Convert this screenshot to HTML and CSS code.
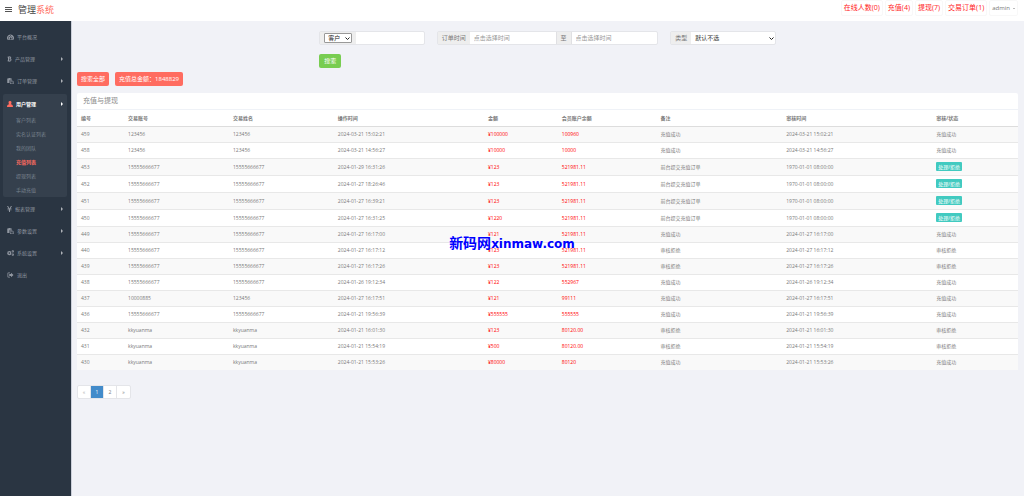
FILE: index.html
```
<!DOCTYPE html>
<html lang="zh-CN">
<head>
    <meta charset="UTF-8">
    <title>管理系统</title>
    <link rel="stylesheet" href="styles.css">
</head>
<body>
    <!--图标-->
    <svg class="sprite" aria-hidden="true">
        <symbol id="i-dash" viewBox="0 0 14 12"><path fill-rule="evenodd" d="M7 1a7 7 0 0 0-6 10.500h12A7 7 0 0 0 7 1zM2 7.200h1.800v1.800H2zM3.500 4h1.800v1.800H3.500zM6.200 2.500h1.600v1.800H6.200zM10.200 7.200H12v1.800h-1.800zM9.500 4l-1.600 3.600a1.600 1.600 0 1 1-1 0L8.800 4z"/></symbol>
        <symbol id="i-btc" viewBox="0 0 10 12"><path fill-rule="evenodd" d="M1 1.500h2.500V0h1v1.500h1V0h1v1.700C9 2.200 9 5 7.500 5.600 10 6.500 9.500 10 6.500 10.400V12h-1v-1.500h-1V12h-1v-1.500H1V9h1V3H1zM4 3v2h1.500c1.500 0 1.500-2 0-2zM4 6.500V9h2c1.600 0 1.600-2.500 0-2.500z"/></symbol>
        <symbol id="i-paste" viewBox="0 0 13 12"><path fill-rule="evenodd" d="M0 1h2.500V0h4v1H9v2.500H5.500L4.500 5v5H0zM5.500 4.500h4v3H13V12H5.500zM10.500 4.500L13 6.800h-2.500zM6.500 5.500V11H12V8.500H8.500v-3z"/></symbol>
        <symbol id="i-user" viewBox="0 0 12 12"><path d="M6 0a3 3 0 0 1 3 3.200c0 1.500-.600 2.600-1.400 3.200C10.500 7 12 8.500 12 12H0c0-3.500 1.500-5 4.400-5.600C3.600 5.800 3 4.700 3 3.200A3 3 0 0 1 6 0z"/></symbol>
        <symbol id="i-yen" viewBox="0 0 10 12"><path d="M0 0h2.200L5 4.800 7.800 0H10L7 5.200h2v1.200H6v1h3v1.200H6V12H4V8.600H1V7.400h3v-1H1V5.200h2z"/></symbol>
        <symbol id="i-cogs" viewBox="0 0 15 12"><path fill-rule="evenodd" d="M4 1.500h2l.3 1.400 1.400-.8L9 3.500l-.8 1.300 1.500.4v2l-1.500.4.8 1.300-1.300 1.400-1.400-.8L6 11H4l-.3-1.500-1.400.8L1 8.900l.7-1.300L0 7.200v-2l1.700-.4L1 3.500l1.300-1.400 1.400.8zM5 4.500a1.700 1.700 0 1 0 0 3.400 1.700 1.700 0 0 0 0-3.400zM12.500 0a2.500 2.500 0 1 1 0 5 2.500 2.500 0 0 1 0-5zm0 1.500a1 1 0 1 0 0 2 1 1 0 0 0 0-2zM12.500 7a2.500 2.500 0 1 1 0 5 2.500 2.500 0 0 1 0-5zm0 1.500a1 1 0 1 0 0 2 1 1 0 0 0 0-2z"/></symbol>
        <symbol id="i-out" viewBox="0 0 12 12"><path d="M5 1v1.500H1.500v7H5V11H1.500C.5 11 0 10.500 0 9.500v-7C0 1.500.5 1 1.500 1zM7 1.500L12 6l-5 4.500V8H3.500V4H7z"/></symbol>
    </svg>

    <header class="header">
        <button class="toggle" aria-label="菜单"><span></span><span></span><span></span></button>
        <a class="logo" href="#">管理<span>系统</span></a>
        <nav class="top-nav">
            <a href="#">在线人数(0)</a>
            <a href="#">充值(4)</a>
            <a href="#">提现(7)</a>
            <a href="#">交易订单(1)</a>
            <a class="admin" href="#">admin <i class="caret"></i></a>
        </nav>
    </header>

    <div class="container">
        <!--左侧菜单-->
        <aside class="sidebar">
            <ul>
                <li><a class="item" href="#"><svg><use href="#i-dash"/></svg>平台概况</a></li>
                <li><a class="item" href="#"><svg class="narrow"><use href="#i-btc"/></svg>产品管理<i class="arrow"></i></a></li>
                <li><a class="item" href="#"><svg><use href="#i-paste"/></svg>订单管理<i class="arrow"></i></a></li>
                <li class="open">
                    <a class="item" href="#"><svg class="user"><use href="#i-user"/></svg>用户管理<i class="arrow"></i></a>
                    <ul class="sub">
                        <li><a href="#">客户列表</a></li>
                        <li><a href="#">实名认证列表</a></li>
                        <li><a href="#">我的团队</a></li>
                        <li><a class="active" href="#">充值列表</a></li>
                        <li><a href="#">提现列表</a></li>
                        <li><a href="#">手动充值</a></li>
                    </ul>
                </li>
                <li><a class="item" href="#"><svg class="narrow"><use href="#i-yen"/></svg>报表管理<i class="arrow"></i></a></li>
                <li><a class="item" href="#"><svg><use href="#i-paste"/></svg>参数设置<i class="arrow"></i></a></li>
                <li><a class="item" href="#"><svg><use href="#i-cogs"/></svg>系统设置<i class="arrow"></i></a></li>
                <li><a class="item" href="#"><svg><use href="#i-out"/></svg>退出</a></li>
            </ul>
        </aside>

        <main class="main">
            <form class="filter">
                <div class="filter-row">
                    <div class="group group-user">
                        <span class="addon"><select class="mini" aria-label="用户类型"><option>客户</option></select></span>
                        <input type="text" aria-label="用户">
                    </div>
                    <div class="group group-time">
                        <label class="addon" for="start">订单时间</label>
                        <input type="text" id="start" placeholder="点击选择时间">
                        <label class="addon to" for="end">至</label>
                        <input type="text" id="end" placeholder="点击选择时间">
                    </div>
                    <div class="group group-type">
                        <label class="addon" for="type">类型</label>
                        <select id="type"><option>默认不选</option></select>
                    </div>
                </div>
                <button type="button" class="btn btn-green">搜索</button>
            </form>

            <div class="actions">
                <button class="btn btn-red">搜索全部</button>
                <button class="btn btn-red">充值总金额：1848829</button>
            </div>

            <section class="panel">
                <h2>充值与提现</h2>
                <table>
                    <colgroup>
                        <col class="c-id"><col class="c-name"><col class="c-name"><col class="c-time"><col class="c-money"><col class="c-balance"><col class="c-note"><col class="c-time"><col>
                    </colgroup>
                    <thead>
                        <tr><th>编号</th><th>交易账号</th><th>交易姓名</th><th>操作时间</th><th>金额</th><th>会员账户余额</th><th>备注</th><th>审核时间</th><th>审核/状态</th></tr>
                    </thead>
                    <tbody>
                        <tr><td>459</td><td>123456</td><td>123456</td><td>2024-03-21 15:02:21</td><td class="red">¥100000</td><td class="red">100960</td><td>充值成功</td><td>2024-03-21 15:02:21</td><td>充值成功</td></tr>
                        <tr><td>458</td><td>123456</td><td>123456</td><td>2024-03-21 14:56:27</td><td class="red">¥10000</td><td class="red">10000</td><td>充值成功</td><td>2024-03-21 14:56:27</td><td>充值成功</td></tr>
                        <tr class="pending"><td>453</td><td>15555666677</td><td>15555666677</td><td>2024-01-29 16:31:26</td><td class="red">¥123</td><td class="red">521981.11</td><td>前台提交充值订单</td><td>1970-01-01 08:00:00</td><td><button class="tag">处理/拒绝</button></td></tr>
                        <tr class="pending"><td>452</td><td>15555666677</td><td>15555666677</td><td>2024-01-27 18:26:46</td><td class="red">¥123</td><td class="red">521981.11</td><td>前台提交充值订单</td><td>1970-01-01 08:00:00</td><td><button class="tag">处理/拒绝</button></td></tr>
                        <tr class="pending"><td>451</td><td>15555666677</td><td>15555666677</td><td>2024-01-27 16:39:21</td><td class="red">¥123</td><td class="red">521981.11</td><td>前台提交充值订单</td><td>1970-01-01 08:00:00</td><td><button class="tag">处理/拒绝</button></td></tr>
                        <tr class="pending"><td>450</td><td>15555666677</td><td>15555666677</td><td>2024-01-27 16:31:25</td><td class="red">¥1220</td><td class="red">521981.11</td><td>前台提交充值订单</td><td>1970-01-01 08:00:00</td><td><button class="tag">处理/拒绝</button></td></tr>
                        <tr><td>449</td><td>15555666677</td><td>15555666677</td><td>2024-01-27 16:17:00</td><td class="red">¥121</td><td class="red">521981.11</td><td>充值成功</td><td>2024-01-27 16:17:00</td><td>充值成功</td></tr>
                        <tr><td>440</td><td>15555666677</td><td>15555666677</td><td>2024-01-27 16:17:12</td><td class="red">¥123</td><td class="red">521981.11</td><td>审核拒绝</td><td>2024-01-27 16:17:12</td><td>审核拒绝</td></tr>
                        <tr><td>439</td><td>15555666677</td><td>15555666677</td><td>2024-01-27 16:17:26</td><td class="red">¥123</td><td class="red">521981.11</td><td>审核拒绝</td><td>2024-01-27 16:17:26</td><td>审核拒绝</td></tr>
                        <tr><td>438</td><td>15555666677</td><td>15555666677</td><td>2024-01-26 19:12:34</td><td class="red">¥122</td><td class="red">552967</td><td>充值成功</td><td>2024-01-26 19:12:34</td><td>充值成功</td></tr>
                        <tr><td>437</td><td>10000885</td><td>123456</td><td>2024-01-27 16:17:51</td><td class="red">¥121</td><td class="red">99111</td><td>充值成功</td><td>2024-01-27 16:17:51</td><td>充值成功</td></tr>
                        <tr><td>436</td><td>15555666677</td><td>15555666677</td><td>2024-01-21 19:56:39</td><td class="red">¥555555</td><td class="red">555555</td><td>充值成功</td><td>2024-01-21 19:56:39</td><td>充值成功</td></tr>
                        <tr><td>432</td><td>kkyuanma</td><td>kkyuanma</td><td>2024-01-21 16:01:30</td><td class="red">¥123</td><td class="red">80120.00</td><td>审核拒绝</td><td>2024-01-21 16:01:30</td><td>审核拒绝</td></tr>
                        <tr><td>431</td><td>kkyuanma</td><td>kkyuanma</td><td>2024-01-21 15:54:19</td><td class="red">¥500</td><td class="red">80120.00</td><td>审核拒绝</td><td>2024-01-21 15:54:19</td><td>审核拒绝</td></tr>
                        <tr><td>430</td><td>kkyuanma</td><td>kkyuanma</td><td>2024-01-21 15:53:26</td><td class="red">¥80000</td><td class="red">80120</td><td>充值成功</td><td>2024-01-21 15:53:26</td><td>充值成功</td></tr>
                    </tbody>
                </table>
            </section>

            <nav class="pagination">
                <a class="off" href="#">«</a>
                <a class="active" href="#">1</a>
                <a href="#">2</a>
                <a href="#">»</a>
            </nav>
        </main>
    </div>

    <!--水印-->
    <div class="watermark"><span>新码网</span>xinmaw.com</div>
</body>
</html>
```

FILE: styles.css
```
*{
    box-sizing: border-box;
    padding: 0;
    margin: 0;
    list-style: none;
}
body{
    display: flex;
    flex-direction: column;
    min-height: 100vh;
    background-color: #f1f2f7;
    color: #797979;
    font-family: "Open Sans", "Noto Sans CJK SC", sans-serif;
    font-size: 5px;
    line-height: 8px;
}
a{
    color: inherit;
    text-decoration: none;
}
button, input, select{
    font: inherit;
    color: inherit;
    border: 0;
    background: none;
}
button{
    cursor: pointer;
}
svg{
    fill: currentColor;
}
.sprite{
    display: none;
}

/*顶部*/
.header{
    display: flex;
    align-items: center;
    height: 21px;
    padding: 0 6px 2px 5px;
    background-color: #fff;
}
.toggle{
    display: flex;
    flex-direction: column;
    gap: 1px;
    width: 7px;
}
.toggle span{
    height: 1px;
    background-color: #555;
}
.logo{
    margin-left: 6px;
    color: #444;
    font-size: 9px;
    line-height: 16px;
}
.logo span{
    color: #ff6c60;
}
.top-nav{
    display: flex;
    align-items: center;
    gap: 2px;
    margin-left: auto;
    margin-bottom: 3px;
    color: #f22;
    font-size: 7px;
}
.top-nav a{
    padding: 3px 2px;
    border: 1px solid #f8f8f8;
    border-radius: 2px;
}
.top-nav .admin{
    display: flex;
    align-items: center;
    gap: 3px;
    color: #797979;
    font-size: 6px;
}
.caret{
    border: 1px solid transparent;
    border-top-color: #797979;
    border-bottom: 0;
}

.container{
    display: flex;
    flex: 1;
}

/*左侧菜单*/
.sidebar{
    width: 72px;
    padding: 5px 4px 0 3px;
    border-right: 1px solid #ccd0da;
    background-color: #2a3542;
    color: #9096a0;
}
.item{
    display: flex;
    align-items: center;
    height: 22px;
    padding: 0 4px;
}
.item svg{
    width: 7px;
    height: 6px;
    margin-right: 3px;
}
.item .narrow{
    width: 5px;
}
.item .user{
    width: 6px;
    color: #ff6c60;
}
.arrow{
    margin-left: auto;
    border: 2px solid transparent;
    border-left-color: #aeb2b7;
    border-right: 0;
}
.open{
    margin: 2px 0 1px;
    border-radius: 2px;
    background-color: #35404d;
}
.open .item{
    height: 19px;
    color: #fff;
    font-weight: bold;
}
.open .arrow{
    border-left-color: #fff;
}
.sub a{
    display: block;
    padding-left: 13px;
    color: #7a8490;
    line-height: 14px;
}
.sub .active{
    color: #ff6c60;
    font-weight: bold;
}

.main{
    flex: 1;
    padding: 10px 6px 0 5px;
}

/*筛选*/
.filter{
    width: 48.5%;
    margin: 0 auto;
    font-size: 6px;
}
.filter-row{
    display: flex;
    gap: 12px;
    margin-bottom: 9px;
}
.group{
    display: flex;
    min-width: 0;
    height: 14px;
    border: 1px solid #e4e5e9;
    border-radius: 2px;
    background-color: #fff;
}
.group-user,
.group-type{
    flex: 105;
}
.group-time{
    flex: 223;
}
.addon{
    display: flex;
    align-items: center;
    padding: 0 4px;
    background-color: #eee;
    white-space: nowrap;
}
.group input,
.group select{
    flex: 1;
    min-width: 0;
    padding: 0 4px;
}
/*下拉箭头*/
.group select{
    appearance: none;
    background: url("data:image/svg+xml,%3Csvg xmlns='http://www.w3.org/2000/svg' viewBox='0 0 10 6'%3E%3Cpath d='M1 1l4 4 4-4' fill='none' stroke='%23222' stroke-width='2'/%3E%3C/svg%3E") right 1px center / 5px 3px no-repeat;
    color: #333;
}
.group .mini{
    flex: none;
    width: 28px;
    height: 10px;
    padding: 0 3px;
    border: 1px solid #999;
    border-radius: 1px;
    background-color: #fff;
    color: #222;
}
.group .to{
    border: 1px solid #e0e0e3;
    border-width: 0 1px;
}
.group input::placeholder{
    color: #999;
}

.btn{
    height: 14px;
    padding: 0 5px;
    border-radius: 2px;
    color: #fff;
    font-size: 6px;
}
.btn-green{
    background-color: #78cd51;
}
.btn-red{
    padding: 0 4px;
    background-color: #ff6c60;
}
.actions{
    display: flex;
    gap: 6px;
    margin: 4px 0 7px;
}

/*列表*/
.panel{
    border-radius: 2px;
    background-color: #fff;
}
.panel h2{
    padding: 0 6px;
    border-bottom: 1px solid #eff2f7;
    color: #8a8a8a;
    font-size: 7px;
    font-weight: 400;
    line-height: 16px;
}
table{
    width: 100%;
    table-layout: fixed;
    border-collapse: collapse;
}
.c-id{
    width: 5%;
}
.c-name{
    width: 11.15%;
}
.c-time{
    width: 15.95%;
}
.c-money{
    width: 7.85%;
}
.c-balance{
    width: 10.5%;
}
.c-note{
    width: 13.35%;
}
th, td{
    height: 16px;
    padding: 0 4px;
    border-top: 1px solid #e8e8e8;
    text-align: left;
    white-space: nowrap;
}
th{
    border-top: 0;
    border-bottom: 1px solid #ddd;
}
tbody tr:nth-child(odd){
    background-color: #f9f9f9;
}
.pending td{
    height: 17px;
}
.red{
    color: #f00;
}
.tag{
    display: block;
    height: 9px;
    padding: 0 2px;
    border-radius: 1px;
    background-color: #41cac0;
    color: #fff;
}

/*分页*/
.pagination{
    display: inline-flex;
    margin-top: 15px;
    border: 1px solid #e4e5e9;
    border-radius: 2px;
    background-color: #fff;
}
.pagination a{
    width: 13px;
    border-right: 1px solid #e4e5e9;
    line-height: 12px;
    text-align: center;
}
.pagination a:last-child{
    border-right: 0;
}
.pagination .active{
    background-color: #428bca;
    color: #fff;
}
.pagination .off{
    color: #aaa;
}

.watermark{
    position: absolute;
    top: 49%;
    left: 50%;
    transform: translate(-50%, -50%);
    color: #00f;
    font-family: "DejaVu Sans", "Noto Sans CJK SC", sans-serif;
    font-size: 12px;
    font-weight: bold;
    line-height: 16px;
    white-space: nowrap;
}
.watermark span{
    font-size: 14px;
}
```
